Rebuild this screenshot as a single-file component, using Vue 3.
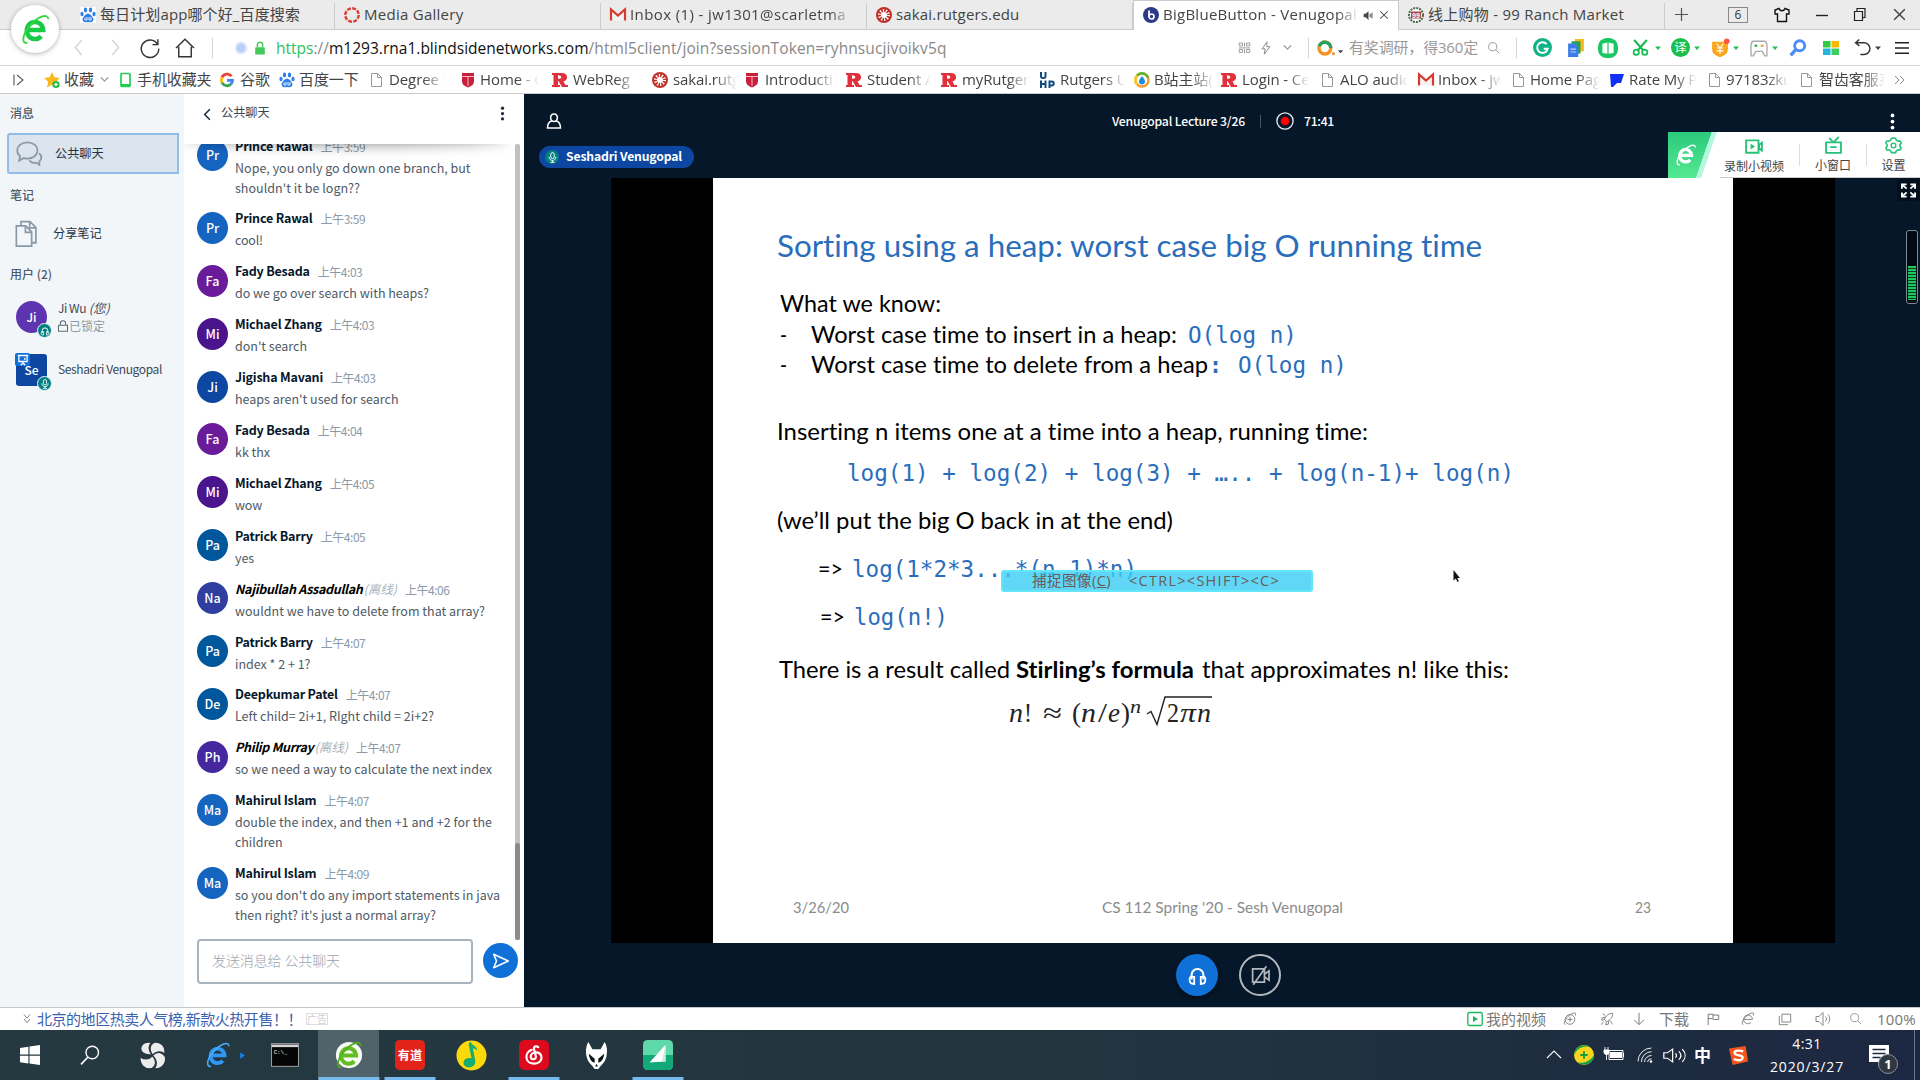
<script setup>
import { h } from 'vue'

/* Adjusts tracking so that a label takes a given width */
const vFit = {
  mounted(el, { value }) {
    if (!value) return
    const r = document.createRange()
    r.selectNodeContents(el)
    const n = el.textContent.length
    el.style.letterSpacing = (value - r.getBoundingClientRect().width) / n + 'px'
  },
}

const page = '<path d="M2.500 1.500h6l4 4v9h-10zM8.500 1.500v4h4" fill="#fff" stroke="#999"/>'
const rut = '<path d="M0 1h10c6 0 7 7 1.500 8.500l2 3.500H16v2h-6l-3.500-6H6v4h2v2H0v-2h1.500V3H0zM6 3.200v3.600c4.500.4 4.500-3.600 0-3.600z" fill="#e0303c" fill-rule="evenodd"/>'
const shield = '<path d="M2 1h12v8c0 4-3 5-6 6.500C5 14 2 13 2 9z" fill="#c8203c"/><path d="M2 4.500h12M8 5v9" stroke="#f6b9c3"/>'
const paw = '<g fill="#2f7fe8"><ellipse cx="5.500" cy="3" rx="1.700" ry="2.400"/><ellipse cx="10.500" cy="3" rx="1.700" ry="2.400"/><ellipse cx="2" cy="7" rx="1.600" ry="2.200"/><ellipse cx="14" cy="7" rx="1.600" ry="2.200"/><path d="M8 6.500c2 0 5.500 4 5.500 6s-2 3.300-5.500 2.500C4.500 15.800 2.500 14.500 2.500 12.500S6 6.500 8 6.500z"/></g><path d="M5 10.500v2.500h2v-3M9 10v3h2v-3" stroke="#fff" fill="none" stroke-width=".9"/>'
const gmail = '<path d="M1 13.500v-11l7 6 7-6v11" fill="#f3f3f3" stroke="#d93a2e" stroke-width="2.200"/>'
const sakai = '<circle cx="8" cy="8" r="8" fill="#c03028"/><circle cx="8" cy="8" r="3" fill="#fff"/><circle cx="8" cy="8" r="4.500" fill="none" stroke="#fff" stroke-width="3" stroke-dasharray="1.200 1.600"/>'
const eLogo = (a, b) => `<path d="M8 16.500h15.500A8 8.300 0 1 0 21.500 22.500" fill="none" stroke="${a}" stroke-width="4.300"/><path d="M8 29c-6 1-5-8 3-17S28 0 28.500 6" fill="none" stroke="${b}" stroke-width="1.800"/>`
const sp = '<path d="M1 5.500h3l4-4v13l-4-4H1z" '

const icons = {
  e: eLogo('#18c94a', '#35d83a'),
  eWhite: eLogo('#fff', '#fff'),
  eBlue: eLogo('#2f98f5', '#47acf9'),
  eTask: '<circle cx="16" cy="16" r="14" fill="#f7f9f2"/>' + eLogo('#62bd25', '#4fae1e'),
  paw, page, rut, shield, gmail, sakai,
  pawBox: '<rect width="16" height="16" fill="#fff"/>' + paw,
  media: '<circle cx="8" cy="8" r="6.700" fill="none" stroke="#dc3b2f" stroke-width="2.400" stroke-dasharray="3.900 1.360"/>',
  bbb: '<circle cx="8" cy="8" r="8" fill="#2b3a86"/><path d="M6 3.500v6" stroke="#fff" stroke-width="1.800"/><circle cx="8.500" cy="9.500" r="2.500" fill="none" stroke="#fff" stroke-width="1.700"/>',
  ranch: '<circle cx="8" cy="8" r="7" fill="#fff" stroke="#456b49" stroke-width="2" stroke-dasharray="2 1"/><rect x="3" y="4.500" width="10" height="7" fill="#b54343"/><text x="8" y="10.600" font-size="7" font-weight="700" fill="#fff" text-anchor="middle" font-family="Liberation Sans">99</text>',
  plus: '<path d="M8 1v14M1 8h14" stroke="#555" stroke-width="1.300"/>',
  shirt: '<path d="M5 1.500L1 3v4h2.500v7.500h9V7H15V3l-4-1.500c-1 3-5 3-6 0z" fill="none" stroke="#111" stroke-width="1.400"/>',
  min: '<path d="M2 8.500h12" stroke="#222" stroke-width="1.400"/>',
  max: '<path d="M2.500 4.500h8v9h-8zM5 4.500v-3h8v9h-2.500" fill="none" stroke="#222" stroke-width="1.200"/>',
  close: '<path d="M3 3l10 10M13 3L3 13" stroke="#444" stroke-width="1.400"/>',
  spk: sp + 'fill="#444"/><path d="M10.500 5.500v5M13 4v8" stroke="#444" stroke-width="1.400" fill="none"/>',
  back: '<path d="M11 1L5 8l6 7" fill="none" stroke="#d4d4d4" stroke-width="1.300"/>',
  fwd: '<path d="M5 1l6 7-6 7" fill="none" stroke="#d4d4d4" stroke-width="1.300"/>',
  reload: '<path d="M14 5A7 7 0 1 0 15 8.500M14.300 1v4.300H10" fill="none" stroke="#333" stroke-width="1.150"/>',
  home: '<path d="M.8 8L8 1l7.200 7M3 7v8h10V7" fill="none" stroke="#333" stroke-width="1.150"/>',
  dot: '<circle cx="8" cy="8" r="7.500" fill="#e4edfd"/><circle cx="8" cy="8" r="5.300" fill="#b7d1fb"/>',
  lock: '<rect x="2.500" y="7" width="11" height="8.500" rx="1" fill="#45c95c"/><path d="M5 7V4.500a3 3 0 0 1 6 0V7" fill="none" stroke="#45c95c" stroke-width="1.700"/>',
  qr: '<path d="M1.500 2.500h4v3.500h-4zM8 2v5M10.500 2.500h4v3.500h-4zM1 8.500h14M1.500 10.500h4V14h-4zM8 10v5M10.500 10.500h4V14h-4z" fill="none" stroke="#8a8a8a"/>',
  bolt: '<path d="M9 1L3.500 9H7l-1 6 6.500-8.500H9z" fill="none" stroke="#888" stroke-width="1.100"/>',
  chev: '<path d="M3.500 5.500L8 10l4.500-4.500" fill="none" stroke="#888" stroke-width="1.300"/>',
  so: '<circle cx="7" cy="8" r="5.300" fill="none" stroke="#f39325" stroke-width="3"/><path d="M2 6.500A5.300 5.300 0 0 1 12.300 8" fill="none" stroke="#21a366" stroke-width="3"/><circle cx="14.500" cy="13" r="1.400" fill="#f39325"/>',
  tri: '<path d="M2 5h12l-6 7z" fill="#1ec057"/>',
  triD: '<path d="M2 5h12l-6 7z" fill="#444"/>',
  mag: '<circle cx="7" cy="7" r="5" fill="none" stroke="#999" stroke-width="1.200"/><path d="M10.500 10.500L15 15" stroke="#999" stroke-width="1.200"/>',
  gram: '<circle cx="8" cy="8" r="8" fill="#11b287"/><path d="M11.500 5.200A4.500 4.500 0 1 0 12.400 9H9" fill="none" stroke="#fff" stroke-width="1.600"/>',
  docs: '<rect x="7" y="0" width="8" height="11" fill="#f7b91c"/><rect x="4" y="2" width="8" height="11" fill="#2c9d5a"/><path d="M1 4h6l3 3v9H1z" fill="#3c7bea"/><path d="M3 9h5M3 11.500h5" stroke="#bcd3fb"/>',
  book: '<rect width="16" height="16" rx="7" fill="#17c964"/><path d="M3.500 4.500l4-1v9l-4-.5zM12.500 4.500l-4-1v9l4-.5z" fill="#fff"/>',
  cut: '<path d="M2 1l9 10M14 1L5 11" stroke="#19b955" stroke-width="2"/><circle cx="4" cy="12.500" r="2.500" fill="none" stroke="#19b955" stroke-width="1.600"/><circle cx="12" cy="12.500" r="2.500" fill="none" stroke="#19b955" stroke-width="1.600"/>',
  yi: '<circle cx="8" cy="8" r="8" fill="#19bf4c"/><text x="8" y="12" font-size="10.500" fill="#fff" text-anchor="middle" font-family="Noto Sans CJK SC">译</text>',
  yen: '<path d="M1 2.500h14V9c0 4-3.500 6-7 7-3.500-1-7-3-7-7z" fill="#fba61b"/><path d="M5 4l3 4 3-4M5 8h6M5 10.500h6M8 8v5" fill="none" stroke="#fff" stroke-width="1.100"/><circle cx="14" cy="2" r="2.500" fill="#ff5548"/>',
  game: '<path d="M3 2h10c3 0 2 8 2 13h-2l-2-4H5l-2 4H1c0-5-1-13 2-13z" fill="none" stroke="#aaa" stroke-width="1.200"/><path d="M4 6h2.500" stroke="#2bb65a" stroke-width="2"/><path d="M9.500 6H12" stroke="#e3a53a" stroke-width="2"/>',
  magB: '<circle cx="9.500" cy="6" r="4.500" fill="none" stroke="#4e8df5" stroke-width="2.600"/><path d="M6 9.500L1.500 14.500" stroke="#4e8df5" stroke-width="3"/>',
  grid: '<rect x="0" y="1" width="7.500" height="6.500" fill="#34c940"/><rect x="8.500" y="1" width="7.500" height="6.500" fill="#fcb900"/><rect x="0" y="8.500" width="7.500" height="6.500" fill="#25b5dc"/><rect x="8.500" y="8.500" width="7.500" height="6.500" fill="#3bcf62"/>',
  undo: '<path d="M2 3.500h7.500a5.500 5.500 0 0 1 0 11H6M5 .5L1.500 3.500 5 6.500" fill="none" stroke="#333" stroke-width="1.400"/>',
  menu: '<path d="M0 2h16M0 8h16M0 14h16" stroke="#222" stroke-width="1.500"/>',
  side: '<path d="M3 2.500v11M6 3l6 5-6 5" fill="none" stroke="#555" stroke-width="1.100"/>',
  star: '<path d="M8 0l2.400 5.300 5.600.6-4.200 3.900 1.200 5.700L8 12.700 3 15.500l1.200-5.700L0 5.900l5.600-.6z" fill="#fbb81c"/><circle cx="12" cy="12.500" r="3.600" fill="#23b948"/><path d="M12 10.500v4M10 12.500h4" stroke="#fff" stroke-width="1.100"/>',
  phone: '<rect x="4" y="1.500" width="9" height="13" rx="1" fill="#fff" stroke="#21cf4e" stroke-width="1.700"/><path d="M4 13h9" stroke="#21cf4e" stroke-width="2"/>',
  goog: '<g fill="none" stroke-width="2.800"><path d="M12.500 4.200A5.600 5.600 0 0 0 3 5.500" stroke="#ea4335"/><path d="M3 5.300a5.600 5.600 0 0 0 0 5.400" stroke="#fbbc05"/><path d="M3 10.700a5.600 5.600 0 0 0 8.800 1.500" stroke="#34a853"/><path d="M11.800 12.200A5.600 5.600 0 0 0 13.500 8.400H8" stroke="#4285f4"/></g>',
  uhp: '<g fill="none" stroke="#124a7e" stroke-width="2"><path d="M2 0v4.500c0 2 4.500 2 4.500 0V0M2 8.500V16M6.500 8.500V16M2 12h4.500M10.500 16V9.500h2c3 0 3 4 0 4h-2"/></g>',
  bili: '<circle cx="8" cy="8" r="6.500" fill="#fff" stroke="#f79a25" stroke-width="2.500"/><path d="M3 3.500a6.500 6.500 0 0 1 11 2" fill="none" stroke="#5cb531" stroke-width="2.500"/><path d="M3 12.500A6.500 6.500 0 0 1 3 3.500" fill="none" stroke="#f5c92b" stroke-width="2.500"/><path d="M8 4c2 2.500 3 4 3 5.500a3 3 0 0 1-6 0C5 8 6 6.500 8 4z" fill="#1e8de0"/>',
  rate: '<path d="M1 2h14l-3 9H8l-4 4H2z" fill="#1030f5"/>',
  more: '<path d="M3 4l4 4-4 4M8 4l4 4-4 4" fill="none" stroke="#888"/>',
  chat: '<g fill="none" stroke="#8b9aa8" stroke-width="1.100"><path d="M7 .8c3.600 0 6.200 2.200 6.200 5s-2.600 5-6.200 5c-.8 0-1.500-.1-2.200-.3L2 12.200l.5-2.800C1.400 8.500.8 7.200.8 5.800c0-2.800 2.600-5 6.200-5z"/><path d="M14.200 7.500c2 1.500 1.600 4 .2 5v2.200l-2-1.400c-1.800.4-3.400-.3-4.200-1.500"/></g>',
  copy: '<g fill="none" stroke="#8b9aa8" stroke-width="1.100"><path d="M4.500 3.500V1h5.800L14 4.500v9h-2.500M10 1v3.700h4M1.500 3.500h6l3.800 3.600v8.400H1.500zM7.300 3.500v3.800h4"/></g>',
  lockG: '<path d="M2 7h12v8H2zM4.500 7V4.500a3.500 3.500 0 0 1 7 0V7" fill="none" stroke="#5d6b78" stroke-width="1.400"/>',
  phones: '<path d="M3.500 11V7.500a4.500 4.500 0 0 1 9 0V11" fill="none" stroke="#fff" stroke-width="1.600"/><path d="M3 9h2.500v5.500C3 14.500 2 13 2 11.500S2.500 9 3 9zM13 9h-2.500v5.500c2.500 0 3.500-1.500 3.500-3S13.500 9 13 9z" fill="none" stroke="#fff" stroke-width="1.400"/>',
  mic: '<rect x="5.500" y="1" width="5" height="8.500" rx="2.500" fill="none" stroke="#fff" stroke-width="1.400"/><path d="M3 7c0 7 10 7 10 0M8 12v3M5 15h6" fill="none" stroke="#fff" stroke-width="1.400"/>',
  pres: '<path d="M1 2h14M2.500 2v8h11V2M8 10v2M5 15l3-3 3 3M10.500 5v3" fill="none" stroke="#fff" stroke-width="1.700"/>',
  left: '<path d="M10.500 2.500L5 8l5.500 5.500" fill="none" stroke="#1c2a3a" stroke-width="1.600"/>',
  dots: '<g fill="currentColor"><circle cx="8" cy="1.500" r="2"/><circle cx="8" cy="8" r="2"/><circle cx="8" cy="14.500" r="2"/></g>',
  send: '<path d="M1.500 2l13 6-13 6L4 8z" fill="none" stroke="#fff" stroke-width="1.400" stroke-linejoin="round"/>',
  user: '<path d="M8 1c5 0 4 7.500 0 7.500S3 1 8 1zM5.500 8C2.500 9 1.500 11 1.500 15h13c0-4-1-6-4-7" fill="none" stroke="#fff" stroke-width="1.500"/>',
  rec: '<circle cx="8" cy="8" r="7.200" fill="none" stroke="#e8ecf0" stroke-width="1.200"/><circle cx="8" cy="8" r="3.800" fill="#f00"/>',
  cam: '<path d="M2 3h9v10H2zM11 7l3.500-2.500v7L11 9M2.500 15L12.500 1" fill="none" stroke="#b3b8be" stroke-width="1.300"/>',
  recv: '<path d="M1 3h11v11H1zM12.500 7l2.500-2v7l-2.500-2z" fill="none" stroke="#25c277" stroke-width="1.700"/><path d="M5 6l4 2.500L5 11z" fill="#25c277"/>',
  win: '<path d="M1 5h14v10H1zM5 9.500h6M4 1l4 4 5-5" fill="none" stroke="#25c277" stroke-width="1.700"/>',
  gear: '<path d="M8 1l2 .3.700 1.700 1.800 1 1.800-.2.900 1.800L14 7.200v1.600l1.200 1.600-.9 1.800-1.800-.2-1.800 1L10 14.700H6L5.300 13l-1.800-1-1.800.2-.9-1.800L2 8.800V7.200L.8 5.600l.9-1.800 1.800.2 1.800-1L6 1.300z" fill="none" stroke="#25c277" stroke-width="1.500"/><circle cx="8" cy="8" r="2.200" fill="none" stroke="#25c277" stroke-width="1.300"/>',
  full: '<path d="M1 6V1.500h5M10 1.500h5V6M15 10v4.500h-5M6 14.500H1V10M1.500 2l4.500 4M14.500 2L10 6M14.500 14L10 10M1.500 14L6 10" fill="none" stroke="#fff" stroke-width="2"/>',
  ad: '<path d="M4 2l4 5 4-5M4 8l4 5 4-5" fill="none" stroke="#777" stroke-width="1.200"/>',
  video: '<rect x=".8" y="1.500" width="14.400" height="13" rx="1.500" fill="none" stroke="#1bb65b" stroke-width="1.300"/><path d="M6 5l5 3-5 3z" fill="#1bb65b"/>',
  s1: '<g fill="none" stroke="#777"><circle cx="8" cy="8.500" r="5.500"/><path d="M8 5.500v6M5 8.500h6M2.500 14C0 15 2 8 7 4s9-4 7 0"/></g>',
  s2: '<g fill="none" stroke="#777"><path d="M14.500 1.500c-5 0-8 3-9.500 7l2.500 2.500c4-1.500 7-4.500 7-9.500zM6 6L2.500 6.500 2 9.500l3-1M10 10l-.5 4-3 .5 1-3.500M4 11l-2.500 3.500M3 2l3 2M12 10l2 4"/></g>',
  s3: '<path d="M8 1v13M2.500 9L8 14.500 13.500 9" fill="none" stroke="#777" stroke-width="1.100"/>',
  s4: '<path d="M2.500 15V2.500h5.500v5H2.500M8 3.500h6.500v5H8" fill="none" stroke="#777" stroke-width="1.100"/>',
  s5: '<path d="M3.500 8.500h9.500A5 5 0 1 0 11.500 12M2.500 14.500C0 14 2 8 7 4s9-4 7 0" fill="none" stroke="#777"/>',
  s6: '<path d="M4.500 2.500h10v9h-10zM1.500 4.500v10h10" fill="none" stroke="#777"/>',
  s7: sp + 'fill="none" stroke="#888"/><path d="M10.500 5.500c1.300 1.500 1.300 3.500 0 5M13 3.500c2.300 3 2.300 6 0 9" stroke="#888" fill="none"/>',
  start: '<path d="M0 2.300L6.700 1.300v6.200H0zM7.600 1.200L16 0v7.500H7.600zM0 8.500h6.700v6.200L0 13.700zM7.600 8.500H16V16l-8.400-1.200z" fill="#fff"/>',
  find: '<circle cx="9.800" cy="6" r="5" fill="none" stroke="#fff" stroke-width="1.100"/><path d="M6.200 9.800L.8 15.500" stroke="#fff" stroke-width="1.300"/>',
  knot: '<g fill="#ececec" stroke="#24363f" stroke-width=".7"><path d="M1.200 3C2 .5 4-.2 7.500.2c-2 2-2 4.800.5 7.400C4.500 8 .2 6.500 1.200 3z"/><path d="M8 7.800C5.500 4.800 6.500 1.500 9 .2c4-.8 7 2.500 6.300 7-1.800-1.600-4.300-2-7.300.6z"/><path d="M8 8c2.500-3 6-2 7.500.5C16.500 12 14 16.500 9 15.800 11 13.500 10.800 11 8 8z"/><path d="M8 8.200c2.800 3.300 2 6.300-.5 7.600C3 16.500 0 13 .7 8.600 2.500 10.500 5.500 10.800 8 8.200z"/></g>',
  arr: '<path d="M4 2l8 6-8 6z" fill="#1583f0"/>',
  cmd: '<rect x=".3" y="1.500" width="15.400" height="13" fill="#050505" stroke="#9a9a9a" stroke-width=".6"/><path d="M.5 2h15v1.500H.5z" fill="#d5d5d5"/><text x="1.500" y="7.300" font-size="3.300" fill="#fff" font-family="Liberation Mono">C:\\_</text>',
  youdao: '<rect width="32" height="32" rx="5" fill="#e2231a"/><text x="16" y="21" font-size="13" font-weight="700" fill="#fff" text-anchor="middle" font-family="Noto Sans CJK SC">有道</text>',
  music: '<circle cx="16" cy="16" r="15.500" fill="#fcd908"/><path d="M15 1.500c1 4 6 4 7 9-3-2-4-2-4.500-1.500l2.500 13c0 9-14 8-12 0 1-3 5-4 8-3L13 4z" fill="#16ac73"/>',
  netease: '<rect width="32" height="32" rx="6" fill="#dd0a1e"/><path d="M20.500 7.500c-2-1.500-5-.5-4.500 2l2 8c.5 4-5.500 4-5.500 0 0-5 10-6.500 11.500.5 1 9-15 10-16 1-.5-4 2-7.500 5.500-8.500" fill="none" stroke="#fff" stroke-width="2.300" stroke-linecap="round"/>',
  fox: '<path d="M7 1l4.500 8h9L25 1c3 5 3 10 2 16-1 5-4 8-6 10l-3 4h-4l-3-4c-2-2-5-5-6-10-1-6-1-11 2-16z" fill="#fff"/><path d="M7.500 14l6.500 5.500v4.500C10 23 8 19 7.500 14zM24.500 14L18 19.500V24c4-1 6-5 6.500-10zM14.500 28l1.500-3 1.500 3z" fill="#0d1418"/>',
  sail: '<rect width="32" height="32" rx="5" fill="#5fd8ab"/><path d="M0 16h32v11a5 5 0 0 1-5 5H5a5 5 0 0 1-5-5z" fill="#12a877"/><path d="M24 5v18l-17 1z" fill="#fff"/><path d="M24 5v18l-4 .2z" fill="#cfe8df"/>',
  up: '<path d="M1 11l7-7 7 7" fill="none" stroke="#fff" stroke-width="1.100"/>',
  guard: '<circle cx="8" cy="8" r="8" fill="#fbd51d"/><path d="M0 8a8 8 0 0 1 13-6C9-0 3 2 0 8zM16 8a8 8 0 0 1-13 6c5 1 10-1 13-6z" fill="#12a04b"/><path d="M8 5v6M5 8h6" stroke="#1c9c3f" stroke-width="1.500"/>',
  batt: '<rect x="6" y="5" width="12" height="6" fill="#fff"/><path d="M5 3.500h14v9H5zM19.500 6v4" fill="none" stroke="#fff"/><path d="M0 3h5v3c-1 2-4 2-5 0zM1 0v3M4 0v3M2.500 7v6" stroke="#fff" fill="#fff" stroke-width=".9"/>',
  wifi: '<g fill="none" stroke="#fff" stroke-width=".9"><path d="M1 14.500A13.500 13.500 0 0 1 14.500 1M4.500 15A10 10 0 0 1 14.500 4.700M7.500 15a7 7 0 0 1 7-6.500M10.500 15a4 4 0 0 1 4-3.300"/></g><circle cx="14" cy="14.500" r="1.200" fill="#fff"/>',
  vol: '<path d="M.6 5.500h2.600L7 2v12l-3.800-3.500H.6z" fill="none" stroke="#fff" stroke-width=".9"/><path d="M9 6c1 1.200 1 2.800 0 4M11.500 4c2 2.600 2 5.400 0 8M14 2c2.800 3.700 2.800 8.300 0 12" fill="none" stroke="#fff" stroke-width=".9"/>',
  sogou: '<path d="M0 2L14 0l2 13-13 3z" fill="#f2561d"/><path d="M12 4.500C7 3 3.500 4.500 5 6.500s7 1 6.500 3.500-4.500 2.500-7.500 1" fill="none" stroke="#fff" stroke-width="2"/>',
  note: '<path d="M0 0h20v17h-7l-4 4v-4H0z" fill="#fff"/><path d="M3.500 4.500h13M3.500 8.500h13M3.500 12.500h8" stroke="#1d2a42" stroke-width="1.300"/>',
}
const boxes = { e: 32, eWhite: 32, eBlue: 32, eTask: 32, youdao: 32, music: 32, netease: 32, fox: 32, sail: 32, batt: 20, note: 21 }
const Ico = ({ n, w = 16, t }) => {
  const b = boxes[n] || 16
  return h('svg', { class: 'ico', width: w, height: t || w, viewBox: n === 'batt' ? '0 0 20 16' : `0 0 ${b} ${b}`, preserveAspectRatio: 'none', innerHTML: icons[n] })
}
Ico.props = ['n', 'w', 't']

/* turns left edges into gaps between consecutive items */
const flow = (list, start = 0) => {
  let end = start
  return list.map(([n, x, w, t]) => {
    const item = { n, w, t: t || w, gap: x - end }
    end = x + w
    return item
  })
}

const tabs = [
  { i: 'pawBox', t: '每日计划app哪个好_百度搜索', f: 200, w: 264 },
  { i: 'media', t: 'Media Gallery', f: 99.5, w: 266 },
  { i: 'gmail', t: 'Inbox (1) - jw1301@scarletma', f: 216, w: 266, fade: 1 },
  { i: 'sakai', t: 'sakai.rutgers.edu', f: 123.5, w: 266 },
  { i: 'bbb', t: 'BigBlueButton - Venugopal', f: 194, w: 266, on: 1, fade: 1 },
  { i: 'ranch', t: '线上购物 - 99 Ranch Market', f: 196, w: 266 },
]
const controls = flow([['shirt', 1775, 16], ['min', 1815, 16], ['max', 1853, 16], ['close', 1892, 17]], 1749)
const nav = flow([['back', 70, 17], ['fwd', 107, 17], ['reload', 140, 20], ['home', 175, 20]])
const tools = flow([
  ['gram', 1532, 19], ['docs', 1566, 18], ['book', 1597, 20], ['cut', 1631, 17], ['tri', 1653, 8], ['yi', 1670, 19], ['tri', 1692, 8],
  ['yen', 1710, 18], ['tri', 1731, 8], ['game', 1749, 18], ['tri', 1770, 8], ['magB', 1788, 18], ['grid', 1822, 16], ['undo', 1853, 17], ['triD', 1873, 8], ['menu', 1894, 14],
], 1516)
const marks = [
  ['star', 44, '收藏', 64, 32], ['chev', 98, '', 114, 1], ['phone', 117, '手机收藏夹', 137, 78], ['goog', 219, '谷歌', 240, 32], ['paw', 279, '百度一下', 299, 62],
  ['page', 369, 'Degree S', 389, 56, 1], ['shield', 460, 'Home - C', 480, 59, 1], ['rut', 552, 'WebReg', 573, 65, 1], ['sakai', 652, 'sakai.rutg', 673, 64, 1],
  ['shield', 744, 'Introducti', 765, 71, 1], ['rut', 846, 'Student A', 867, 64, 1], ['rut', 941, 'myRutger', 962, 68, 1], ['uhp', 1039, 'Rutgers U', 1060, 66, 1],
  ['bili', 1134, 'B站主站(', 1154, 60, 1], ['rut', 1221, 'Login - Ce', 1242, 67, 1], ['page', 1320, 'ALO audio', 1340, 68, 1], ['gmail', 1418, 'Inbox - jw', 1438, 64, 1],
  ['page', 1511, 'Home Pag', 1530, 70, 1], ['rate', 1609, 'Rate My P', 1629, 68, 1], ['page', 1707, '97183zku', 1726, 63, 1], ['page', 1799, '智齿客服系', 1819, 66, 1],
].map((m, k, a) => ({ n: m[0], t: m[2], pad: m[3] - m[1] - 16, tw: m[4], fade: m[5], w: (a[k + 1] ? a[k + 1][1] : 1892) - m[1] }))

const chat = [
  ['Pr', 'Prince Rawal', 77.6, '3:59', '#1565c0', [['Nope, you only go down one branch, but', 235.600], ["shouldn't it be logn??", 125]]],
  ['Pr', 'Prince Rawal', 77.6, '3:59', '#1565c0', [['cool!', 28]]],
  ['Fa', 'Fady Besada', 74.8, '4:03', '#6a1b9a', [['do we go over search with heaps?', 194]]],
  ['Mi', 'Michael Zhang', 86.7, '4:03', '#4a148c', [["don't search", 72]]],
  ['Ji', 'Jigisha Mavani', 88, '4:03', '#0d47a1', [["heaps aren't used for search", 163.500]]],
  ['Fa', 'Fady Besada', 74.8, '4:04', '#6a1b9a', [['kk thx', 35]]],
  ['Mi', 'Michael Zhang', 86.7, '4:05', '#4a148c', [['wow', 27]]],
  ['Pa', 'Patrick Barry', 77.8, '4:05', '#01579b', [['yes', 19]]],
  ['Na', 'Najibullah Assadullah', 127.5, '4:06', '#303f9f', [['wouldnt we have to delete from that array?', 250]], 1],
  ['Pa', 'Patrick Barry', 77.8, '4:07', '#01579b', [['index * 2 + 1?', 75.500]]],
  ['De', 'Deepkumar Patel', 102.8, '4:07', '#01579b', [['Left child= 2i+1, RIght child = 2i+2?', 199]]],
  ['Ph', 'Philip Murray', 78.5, '4:07', '#4527a0', [['so we need a way to calculate the next index', 257]], 1],
  ['Ma', 'Mahirul Islam', 81.5, '4:07', '#1565c0', [['double the index, and then +1 and +2 for the', 257], ['children', 47.500]]],
  ['Ma', 'Mahirul Islam', 81.5, '4:09', '#1565c0', [["so you don't do any import statements in java", 265], ["then right? it's just a normal array?", 201]]],
]

/* slide text runs: kind, x, baseline, width, text */
const runs = [
  ['title', 777, 256.5, 705, 'Sorting using a heap: worst case big O running time'],
  ['body', 780, 312, 161, 'What we know:'],
  ['body', 780, 342.5, 7, '-'],
  ['body', 811, 342.5, 366, 'Worst case time to insert in a heap:'],
  ['mono', 1188, 342.5, 109, 'O(log n)'],
  ['body', 780, 372.5, 7, '-'],
  ['body', 811, 372.5, 397, 'Worst case time to delete from a heap'],
  ['mono bold', 1209, 372.5, 13, ':'],
  ['mono', 1238, 372.5, 109, 'O(log n)'],
  ['body', 777, 440, 591, 'Inserting n items one at a time into a heap, running time:'],
  ['mono', 847, 481, 667, 'log(1) + log(2) + log(3) + ….. + log(n-1)+ log(n)'],
  ['body', 777, 529, 396, '(we’ll put the big O back in at the end)'],
  ['body', 818, 577, 25, '=>'],
  ['mono', 852, 577, 285, 'log(1*2*3...*(n-1)*n)'],
  ['body', 820, 624.5, 25, '=>'],
  ['mono', 854, 624.5, 94, 'log(n!)'],
  ['body', 779, 677.5, 231, 'There is a result called'],
  ['body bold', 1016, 677.5, 178, 'Stirling’s formula'],
  ['body', 1202, 677.5, 307, 'that approximates n! like this:'],
  ['math', 1009, 722, 14, 'n'],
  ['math up', 1024, 722, 8, '!'],
  ['math up', 1043, 722, 19, '≈'],
  ['math up', 1072, 722, 9, '('],
  ['math', 1081, 722, 15, 'n'],
  ['math up', 1098, 722, 9, '/'],
  ['math', 1108, 722, 12, 'e'],
  ['math up', 1121, 722, 9, ')'],
  ['math sup', 1130, 713, 11, 'n'],
  ['math up', 1167, 722, 12, '2'],
  ['math', 1180, 722, 16, 'π'],
  ['math', 1197, 722, 14, 'n'],
  ['foot', 793, 913, 56, '3/26/20'],
  ['foot', 1102, 913, 241, "CS 112 Spring '20 - Sesh Venugopal"],
  ['foot', 1635, 913, 16, '23'],
]

const statusA = flow([['s1', 1563, 14], ['s2', 1600, 14], ['s3', 1632, 14]], 1547)
const statusB = flow([['s4', 1706, 14], ['s5', 1741, 14], ['s6', 1778, 14], ['s7', 1815, 16], ['mag', 1849, 13]], 1690)
const tasks = [
  ['start', 60, 20], ['find', 60, 20], ['knot', 65, 27], ['eBlue', 66, 28], ['cmd', 67, 28], ['eTask', 61, 30, 'on', 61],
  ['youdao', 62, 30, 'run', 51], ['music', 61, 31], ['netease', 63, 30, 'run', 51], ['fox', 62, 29], ['sail', 62, 30, 'run', 51],
]
const tray = flow([['up', 1545, 16], ['guard', 1573, 20], ['batt', 1603, 20, 16], ['wifi', 1636, 16], ['vol', 1662, 22, 17]], 1546)
</script>

<template>
  <div class="desk">
    <div class="tabs">
      <div v-for="(t, k) in tabs" :key="k" class="tab" :class="{ on: t.on }" :style="{ width: t.w + 'px' }">
        <Ico :n="t.i" :w="16" />
        <span class="tt" :class="{ fade: t.fade, short: t.on }"><span v-fit="t.f">{{ t.t }}</span></span>
        <template v-if="t.on"><Ico n="spk" :w="11" /><Ico n="close" class="tc" :w="12" /></template>
      </div>
      <Ico n="plus" class="newtab" :w="15" />
      <span class="count">6</span>
      <Ico v-for="c in controls" :key="c.n" :n="c.n" :w="c.w" :style="{ marginLeft: c.gap + 'px' }" />
    </div>

    <div class="bar">
      <Ico v-for="c in nav" :key="c.n" :n="c.n" :w="c.w" :style="{ marginLeft: c.gap + 'px' }" />
      <i class="sep s1"></i>
      <Ico n="dot" class="site" :w="14" /><Ico n="lock" class="site2" :w="14" />
      <div class="url"><span v-fit="37.500" class="g">https</span><span v-fit="15.500">://</span><span v-fit="259.500" class="k">m1293.rna1.blindsidenetworks.com</span><span v-fit="358">/html5client/join?sessionToken=ryhnsucjivoikv5q</span></div>
      <Ico n="qr" :w="13" /><Ico n="bolt" class="m8" :w="14" /><Ico n="chev" class="m8" :w="13" />
      <i class="sep s2"></i>
      <Ico n="so" class="m9" :w="18" /><Ico n="triD" :w="7" class="sd" />
      <span class="hint"><span v-fit="129">有奖调研，得360定</span></span>
      <Ico n="mag" class="hm" :w="13" />
      <i class="sep s3"></i>
      <Ico v-for="(c, k) in tools" :key="k" :n="c.n" :w="c.w" :style="{ marginLeft: c.gap + 'px' }" />
    </div>

    <div class="marks">
      <Ico n="side" class="side" :w="16" />
      <div v-for="(m, k) in marks" :key="k" class="mark" :style="{ width: m.w + 'px' }">
        <Ico :n="m.n" :w="m.n === 'chev' ? 13 : 16" />
        <span :class="{ fade: m.fade }" :style="{ marginLeft: m.pad + 'px', width: m.tw + 'px' }">{{ m.t }}</span>
      </div>
      <Ico n="more" :w="16" />
    </div>
    <div class="logo"><Ico n="e" :w="33" /></div>

    <div class="app">
      <aside class="users">
        <h2>消息</h2>
        <div class="pick"><Ico n="chat" :w="26" :t="26" /><span>公共聊天</span></div>
        <h2 class="h2b">笔记</h2>
        <div class="notes"><Ico n="copy" :w="25" :t="27" /><span>分享笔记</span></div>
        <h2 class="h2c">用户 (2)</h2>
        <div class="person">
          <div class="av ji">Ji<b class="badge"><Ico n="phones" :w="10" /></b></div>
          <div class="who"><div><span v-fit="28">Ji Wu</span> <em>(您)</em></div><div class="locked"><Ico n="lockG" :w="12" />已锁定</div></div>
        </div>
        <div class="person p2">
          <div class="av se"><b class="pres"><Ico n="pres" :w="12" /></b>Se<b class="badge"><Ico n="mic" :w="10" /></b></div>
          <div class="who one"><span v-fit="104">Seshadri Venugopal</span></div>
        </div>
      </aside>

      <section class="chat">
        <header><Ico n="left" :w="15" /><span>公共聊天</span><Ico n="dots" class="hd" :w="13" :t="13" /></header>
        <div class="log">
          <div class="shade"></div>
          <div class="msgs">
            <div v-for="(m, k) in chat" :key="k" class="msg">
              <div class="cav" :style="{ background: m[4] }">{{ m[0] }}</div>
              <div>
                <div class="nm"><b v-fit="m[2]" :class="{ off: m[6] }">{{ m[1] }}</b><em v-if="m[6]">(离线)</em><time v-fit="44.500">上午{{ m[3] }}</time></div>
                <p v-for="l in m[5]" :key="l[0]"><span v-fit="l[1]">{{ l[0] }}</span></p>
              </div>
            </div>
          </div>
          <div class="track"><i></i></div>
        </div>
        <div class="entry"><div class="box"><span v-fit="128">发送消息给 公共聊天</span></div><div class="send"><Ico n="send" :w="18" /></div></div>
      </section>

      <main>
        <div class="top">
          <Ico n="user" :w="16" />
          <div class="ttl"><span v-fit="133">Venugopal Lecture 3/26</span><i></i><Ico n="rec" :w="18" /><span v-fit="30" class="clock">71:41</span></div>
          <Ico n="dots" class="opts" :w="15" :t="15" />
        </div>
        <div class="talk"><span class="pill"><i><Ico n="mic" :w="11" /></i><span v-fit="116">Seshadri Venugopal</span></span></div>
        <div class="stage">
          <svg class="slide" width="1020" height="765" viewBox="713 178 1020 765">
            <rect x="713" y="178" width="1020" height="765" fill="#fff" />
            <text v-for="(r, k) in runs" :key="k" :class="r[0]" :x="r[1]" :y="r[2]" :textLength="r[3]" lengthAdjust="spacingAndGlyphs">{{ r[4] }}</text>
            <path d="M1147 714l4-2.500 6 13 8-27.500h47" fill="none" stroke="#222" stroke-width="1.400" />
            <path d="M1453.500 570v10.500l2.300-2 1.700 3.500 1.300-.7-1.500-3.300h2.700z" fill="#111" />
          </svg>
          <div class="snip"><span v-fit="79">捕捉图像(<u>C</u>)</span><span v-fit="151" class="keys">&lt;CTRL&gt;&lt;SHIFT&gt;&lt;C&gt;</span></div>
        </div>
        <div class="acts"><div class="hp"><Ico n="phones" :w="21" /></div><div class="cm"><Ico n="cam" :w="21" /></div></div>
        <div class="fs"><Ico n="full" :w="15" /></div>
        <div class="meter"><i></i></div>
        <div class="rectool">
          <div class="ge"><Ico n="eWhite" :w="24" /></div>
          <div class="rt r1"><Ico n="recv" :w="18" /><span>录制小视频</span></div><i></i>
          <div class="rt r2"><Ico n="win" :w="17" /><span>小窗口</span></div><i></i>
          <div class="rt r3"><Ico n="gear" :w="17" /><span>设置</span></div>
        </div>
      </main>
    </div>

    <div class="status">
      <Ico n="ad" class="adi" :w="12" /><a v-fit="265">北京的地区热卖人气榜,新款火热开售！！</a><span class="adb">广告</span>
      <div class="grow"></div>
      <Ico n="video" :w="16" /><span class="mv">我的视频</span>
      <Ico v-for="c in statusA" :key="c.n" :n="c.n" :w="c.w" :style="{ marginLeft: c.gap + 'px' }" />
      <span class="dl">下载</span>
      <Ico v-for="c in statusB" :key="c.n" :n="c.n" :w="c.w" :style="{ marginLeft: c.gap + 'px' }" />
      <span class="zoom"><span v-fit="39">100%</span></span>
    </div>

    <div class="task">
      <div v-for="t in tasks" :key="t[0]" class="tk" :class="t[3]" :style="{ width: t[1] + 'px' }">
        <Ico :n="t[0]" :w="t[2]" /><u v-if="t[4]" :style="{ width: t[4] + 'px' }"></u><Ico v-if="t[0] === 'eBlue'" n="arr" class="tarr" :w="9" />
      </div>
      <div class="grow"></div>
      <Ico v-for="c in tray" :key="c.n" :n="c.n" :w="c.w" :t="c.t" :style="{ marginLeft: c.gap + 'px' }" />
      <span class="zh">中</span><Ico n="sogou" class="sg" :w="19" />
      <div class="when"><span v-fit="29.500">4:31</span><span v-fit="74">2020/3/27</span></div>
      <div class="note"><Ico n="note" :w="21" /><b>1</b></div>
      <i class="peek"></i>
    </div>
  </div>
</template>

<style>
body { margin: 0; overflow: hidden; }
.ico { display: block; flex: none; overflow: visible; }
</style>

<style scoped>
* { box-sizing: border-box; }
.desk { position: relative; width: 1920px; height: 1080px; overflow: hidden; background: #fff; font-family: "Open Sans", "Noto Sans CJK SC", sans-serif; white-space: nowrap; display: flex; flex-direction: column; }
.grow { flex: 1; }
.fade { mask-image: linear-gradient(90deg, #000 calc(100% - 22px), transparent); }
.tabs { height: 30px; flex: none; background: #ebebeb; border-bottom: 1px solid #ccc; display: flex; align-items: center; padding-left: 71px; }
.tab { height: 30px; flex: none; display: flex; align-items: center; padding-left: 9px; position: relative; font-size: 15px; color: #444; border-right: 1px solid #ccc; border-image: linear-gradient(transparent 12%, #ccc 12%) 1; border-width: 0 1px 0 0; }
.tab.on { background: #fff; border-image: none; border: 1px solid #ccc; border-width: 1px 1px 0; }
.tt { margin-left: 4px; width: 222px; overflow: hidden; line-height: 26px; padding-bottom: 2px; }
.tt.short { width: 196px; margin-right: 4px; }
.tc { margin-left: 4px; }
.newtab { margin-left: 9px; }
.count { margin-left: 39px; width: 20px; height: 16px; border: 1px solid #888; font-size: 12px; line-height: 14px; text-align: center; color: #333; }
.bar { height: 36px; flex: none; display: flex; align-items: center; border-bottom: 1px solid #d4d4d4; }
.sep { width: 1px; height: 20px; background: #d5d5d5; flex: none; }
.s1 { margin-left: 17px; }
.site { margin-left: 21px; }
.site2 { margin-left: 5px; }
.url { width: 961px; margin-left: 9px; margin-right: 1px; font-size: 15.500px; color: #888; display: flex; line-height: 34px; }
.url .g { color: #2fc25b; }
.url .k { color: #111; }
.m8 { margin-left: 8px; }
.s2 { margin-left: 14px; }
.m9 { margin-left: 8px; }
.sd { margin: 8px 0 0 2px; }
.hint { width: 130px; margin: -2px 0 0 5px; font-size: 15px; color: #999; overflow: hidden; }
.hm { margin-left: 8px; }
.s3 { margin-left: 16px; }
.marks { height: 28px; flex: none; display: flex; align-items: center; border-bottom: 1px solid #ccc; }
.side { margin: 0 17px 0 11px; }
.mark { display: flex; align-items: center; flex: none; font-size: 15px; letter-spacing: -.1px; color: #444; }
.mark span { overflow: hidden; line-height: 27px; display: block; flex: none; }
.logo { position: absolute; left: 11px; top: 5px; width: 48px; height: 48px; border-radius: 50%; background: #fff; box-shadow: 0 1px 5px rgba(0,0,0,.3); display: flex; align-items: center; justify-content: center; }

.app { height: 914px; flex: none; display: flex; font-family: "Noto Sans CJK SC", sans-serif; border-bottom: 1px solid #c4c8cc; }
.users { width: 184px; background: #f3f6f9; color: #4e5a66; font-size: 12.200px; }
.users h2 { font-size: 12px; font-weight: 500; margin: 10px 0 0 10px; line-height: 18px; color: #4e5a66; }
.pick { margin: 11px 0 0 7px; width: 172px; height: 41px; border: 2px solid #92bce9; border-radius: 3px 0 0 3px; background: #dce4ee; display: flex; align-items: center; padding-left: 7px; color: #243447; }
.pick span { margin: -2px 0 0 13px; }
.users .h2b { margin-top: 12px; }
.notes { display: flex; align-items: center; height: 40px; margin: 9px 0 0 14px; color: #243447; }
.notes span { margin: -1px 0 0 14px; }
.users .h2c { margin-top: 12px; }
.person { display: flex; align-items: center; margin: 18px 0 0 16px; height: 32px; font-size: 12px; line-height: 18px; }
.p2 { margin-top: 21px; }
.one { margin-top: -2px; }
.av { width: 31px; height: 32px; border-radius: 50%; background: #5e35b1; color: #fff; font-size: 12px; font-weight: 500; display: flex; align-items: center; justify-content: center; position: relative; padding-bottom: 1px; }
.se { background: #0d47a1; border-radius: 3px; }
.badge { position: absolute; right: -5px; bottom: -5px; width: 15px; height: 15px; border-radius: 50%; background: #008081; border: 1px solid #f3f6f9; display: flex; align-items: center; justify-content: center; }
.pres { position: absolute; left: -1px; top: -1px; width: 15px; height: 13px; background: #0f70d7; border-radius: 2px; display: flex; align-items: center; justify-content: center; }
.who { margin-left: 11px; color: #3a4857; }
.who em { font-size: 12.500px; }
.locked { display: flex; align-items: center; color: #8b9aa8; margin-left: -1px; }
.chat { width: 340px; color: #4e5a66; }
.chat header { height: 50px; display: flex; align-items: flex-start; padding: 9px 0 0 16px; color: #3a4857; font-size: 12.200px; line-height: 18px; }
.chat header > svg:first-child { margin-top: 4px; }
.chat header span { margin-left: 6px; }
.hd { margin: 4px 15px 0 auto; color: #1c2a3a; }
.log { position: relative; height: 796px; overflow: hidden; display: flex; justify-content: space-between; }
.shade { position: absolute; left: 0; top: -14px; width: 325px; height: 14px; z-index: 1; border-radius: 50%; box-shadow: 0 0 14px rgba(0,0,0,.5); }
.msgs { margin: -8.500px 0 0 13px; }
.msg { display: flex; padding-bottom: 10.900px; }
.cav { width: 31px; height: 32px; margin: 3.500px 7px 0 0; border-radius: 50%; color: #fff; font-size: 12.500px; font-weight: 500; display: flex; align-items: center; justify-content: center; flex: none; padding-bottom: 1px; }
.nm { height: 22px; line-height: 20px; display: flex; font-size: 12.500px; }
.nm b { color: #06172a; font-weight: 600; }
.nm .off { font-style: italic; color: #000; }
.nm em { color: #a7b3bd; margin-left: 1px; }
.nm time { color: #8b9aa8; font-size: 12px; margin: 1px 0 0 8px; }
.msg p { margin: 0; height: 20px; line-height: 20px; font-size: 12.500px; }
.track { width: 5px; margin-right: 4px; background: #c1c1c1; border-radius: 2px; display: flex; align-items: flex-end; }
.track i { width: 5px; height: 97px; background: #8b8b8b; border-radius: 2px; }
.entry { display: flex; align-items: flex-start; margin: -1px 0 0 13px; }
.box { width: 276px; height: 45px; border: 2px solid #a7b3bd; border-radius: 4px; padding-left: 13px; line-height: 38px; font-size: 14px; color: #9ba6b1; font-weight: 300; }
.send { width: 35px; height: 35px; margin: 4px 0 0 10px; border-radius: 50%; background: #0f70d7; display: flex; align-items: center; justify-content: center; }

main { width: 1396px; background: #06172a; position: relative; color: #fff; }
.top { height: 52px; display: flex; align-items: center; padding: 2px 20px 0 22px; }
.ttl { display: flex; align-items: center; margin-left: 550px; font-size: 12.200px; font-weight: 500; }
.ttl i { width: 1px; height: 13px; background: #4a5666; margin: 0 15px; }
.clock { margin-left: 10px; }
.opts { margin-left: auto; }
.talk { height: 32px; padding-left: 15px; }
.pill { width: 155px; height: 22px; border-radius: 11px; background: #0d47a1; display: flex; align-items: center; font-size: 12.200px; font-weight: 600; padding-left: 6px; line-height: 20px; }
.pill i { width: 14px; height: 14px; border-radius: 50%; background: #008081; display: flex; align-items: center; justify-content: center; margin-right: 7px; }
.pill > span { padding-bottom: 2px; }
.stage { height: 765px; width: 1224px; margin-left: 87px; background: #000; position: relative; padding-left: 102px; }
.slide { display: block; }
.slide text { font-family: Lato, sans-serif; fill: #000; font-variant-ligatures: none; }
.slide .title { font-size: 30.500px; fill: #2a6ebb; }
.slide .body { font-size: 23.300px; }
.slide .mono { font-family: "DejaVu Sans Mono", monospace; font-size: 22.500px; fill: #2a6ebb; }
.slide .bold { font-weight: 700; }
.slide .math { font-family: "Liberation Serif", serif; font-style: italic; font-size: 27px; fill: #222; }
.slide .up { font-style: normal; }
.slide .sup { font-size: 19px; }
.slide .foot { font-size: 16px; fill: #8b8b8b; }
.snip { position: absolute; left: 390px; top: 392px; width: 312px; height: 22px; background: rgba(57,205,245,.8); border: 2px solid #62e6f8; border-radius: 3px; display: flex; align-items: center; color: #6b5b52; font-family: "Open Sans", "Noto Sans CJK SC", sans-serif; font-size: 14.500px; padding-left: 29px; line-height: 18px; }
.keys { margin-left: 18px; }
.acts { display: flex; gap: 21px; margin: 11px 0 0 652px; }
.hp, .cm { width: 42px; height: 42px; border-radius: 50%; display: flex; align-items: center; justify-content: center; }
.hp { background: #0f70d7; box-shadow: 0 2px 4px rgba(0,0,0,.5); }
.cm { border: 2.500px solid #b3b8be; }
.fs { position: absolute; right: 0; top: 85px; width: 23px; height: 22px; background: #030f1c; border-radius: 4px; display: flex; align-items: center; padding-left: 4px; }
.meter { position: absolute; left: 1382px; top: 136px; width: 12px; height: 74px; border: 1px solid #7d8a96; border-radius: 3px; background: #020a14; display: flex; align-items: flex-end; padding: 0 1px 3px; }
.meter i { width: 8px; height: 34px; background: repeating-linear-gradient(#1fc95e 0 2px, #0a3d28 2px 3px); }
.rectool { position: absolute; right: 0; top: 38px; width: 252px; height: 46px; background: #fff; border-bottom: 1px solid #ccc; display: flex; align-items: center; color: #444; font-size: 12px; }
.ge { width: 52px; height: 46px; background: linear-gradient(107deg, transparent 72%, #b5f8df 72.500px 84%, #fff 84.500%), linear-gradient(#2bca7d, #55e892); background: linear-gradient(109deg, transparent 41px, #b5f8df 41.500px 46px, #fff 46.500px), linear-gradient(#2bca7d, #55e892); display: flex; align-items: center; padding-left: 6px; }
.rt { display: flex; flex-direction: column; align-items: center; line-height: 16px; gap: 3px; padding-top: 1px; }
.r1 { width: 68px; margin-right: 11px; }
.r2 { width: 66px; }
.r3 { width: 53px; }
.rectool > i { width: 1px; height: 22px; background: #ddd; }

.status { height: 22px; flex: none; display: flex; align-items: center; font-size: 15px; line-height: 20px; padding-bottom: 1px; color: #777; background: #fff; }
.status a { color: #3a62b0; }
.adi { margin: 0 4px 0 21px; }
.adb { margin-left: 4px; width: 22px; height: 12px; border: 1px solid #ddd; font-size: 10px; line-height: 10px; color: #d0d0d0; }
.mv { width: 61px; margin-left: 3px; }
.dl { width: 31px; margin-left: 13px; }
.zoom { width: 43px; margin-left: 15px; }
.task { height: 50px; flex: none; background: linear-gradient(90deg, #253941, #22353f 55%, #1e2d40 80%, #1c2841); display: flex; align-items: center; color: #fff; }
.tk { height: 50px; flex: none; display: flex; align-items: center; justify-content: center; position: relative; }
.tk.on { background: #50626a; }
.tk u { position: absolute; bottom: 0; left: 50%; transform: translateX(-50%); height: 3px; background: #76b9ed; }
.tarr { position: absolute; right: 4px; }
.zh { font-size: 17px; font-weight: 700; margin: -2px 0 0 9px; width: 17px; }
.sg { margin-left: 18px; }
.when { width: 80px; margin-left: 19px; font-size: 14px; display: flex; flex-direction: column; align-items: center; line-height: 23px; padding-bottom: 1px; }
.note { position: relative; margin-left: 22px; }
.note b { position: absolute; left: 9px; top: 9px; width: 20px; height: 20px; border-radius: 50%; background: #2f3742; border: 1px solid #8a8f96; font-size: 13px; line-height: 18px; text-align: center; }
.peek { width: 1px; height: 50px; background: #6c7585; margin: 0 5px 0 24px; }
</style>
